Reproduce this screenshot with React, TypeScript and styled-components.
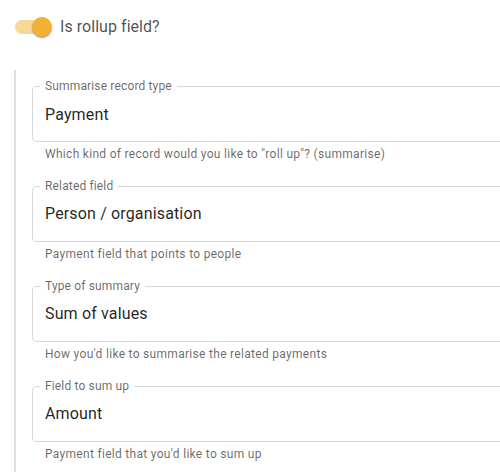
import styled, { createGlobalStyle } from "styled-components";

const GlobalStyle = createGlobalStyle`
    body {
        margin: 0;
        background: #FFFFFF;
        font-family: Roboto, "Liberation Sans", sans-serif;
    }
`

type fieldType = {
    label: string
    value: string
    helper: string
}

const fields: fieldType[] = [
    {label: 'Summarise record type', value: 'Payment', helper: 'Which kind of record would you like to "roll up"? (summarise)'},
    {label: 'Related field', value: 'Person / organisation', helper: 'Payment field that points to people'},
    {label: 'Type of summary', value: 'Sum of values', helper: "How you'd like to summarise the related payments"},
    {label: 'Field to sum up', value: 'Amount', helper: "Payment field that you'd like to sum up"},
]

const App = () => {
    return (
        <Page>
            <GlobalStyle/>
            <SwitchRow>
                <Switch>
                    <Track/>
                    <Thumb/>
                </Switch>
                <SwitchLabel>Is rollup field?</SwitchLabel>
            </SwitchRow>
            <Group>
                {fields.map(f => (
                    <FieldBox key={f.label}>
                        <Outlined>
                            <FloatLabel>{f.label}</FloatLabel>
                            <Value>{f.value}</Value>
                        </Outlined>
                        <Helper>{f.helper}</Helper>
                    </FieldBox>
                ))}
            </Group>
        </Page>
    );
};

export default App;

const Page = styled.div`
    display: flex;
    flex-direction: column;
    padding: 8px 0 0 14px;
    width: 500px;
    box-sizing: border-box;
    overflow: hidden;
`

const SwitchRow = styled.div`
    display: flex;
    align-items: center;
    height: 38px;
`

const Switch = styled.span`
    position: relative;
    display: flex;
    align-items: center;
    width: 38px;
    height: 38px;
    margin-left: 1px;
    margin-right: 7px;
`

const Track = styled.span`
    width: 34px;
    height: 14px;
    border-radius: 7px;
    background: #F2B035;
    opacity: 0.5;
`

const Thumb = styled.span`
    position: absolute;
    left: 17px;
    top: 9px;
    width: 20px;
    height: 20px;
    border-radius: 50%;
    background: #F2B035;
    box-shadow: 0 2px 1px -1px rgba(0, 0, 0, 0.2), 0 1px 1px 0 rgba(0, 0, 0, 0.14), 0 1px 3px 0 rgba(0, 0, 0, 0.12);
`

const SwitchLabel = styled.span`
    font-size: 16px;
    line-height: 1.5;
    letter-spacing: 0.05px;
    color: rgba(0, 0, 0, 0.7);
`

const Group = styled.div`
    display: flex;
    flex-direction: column;
    margin-top: 24px;
    padding: 16px 0 0 16px;
    border-left: 2px solid #E0E0E0;
`

const FieldBox = styled.div`
    display: flex;
    flex-direction: column;
    margin-bottom: 21px;
    margin-right: -40px;
`

const Outlined = styled.div`
    position: relative;
    display: flex;
    align-items: center;
    height: 54px;
    padding: 0 12px;
    border: 1px solid #D6D6D6;
    border-radius: 4px;
`

const FloatLabel = styled.span`
    position: absolute;
    left: 7px;
    top: -9px;
    padding: 0 5px;
    background: #FFFFFF;
    font-size: 12px;
    line-height: 16px;
    letter-spacing: 0.15px;
    color: rgba(0, 0, 0, 0.6);
`

const Value = styled.span`
    font-size: 16px;
    line-height: 23px;
    letter-spacing: 0.15px;
    color: rgba(0, 0, 0, 0.87);
`

const Helper = styled.p`
    margin: 3px 14px 0 13px;
    font-size: 12px;
    line-height: 1.66;
    letter-spacing: 0.3px;
    color: rgba(0, 0, 0, 0.6);
`
